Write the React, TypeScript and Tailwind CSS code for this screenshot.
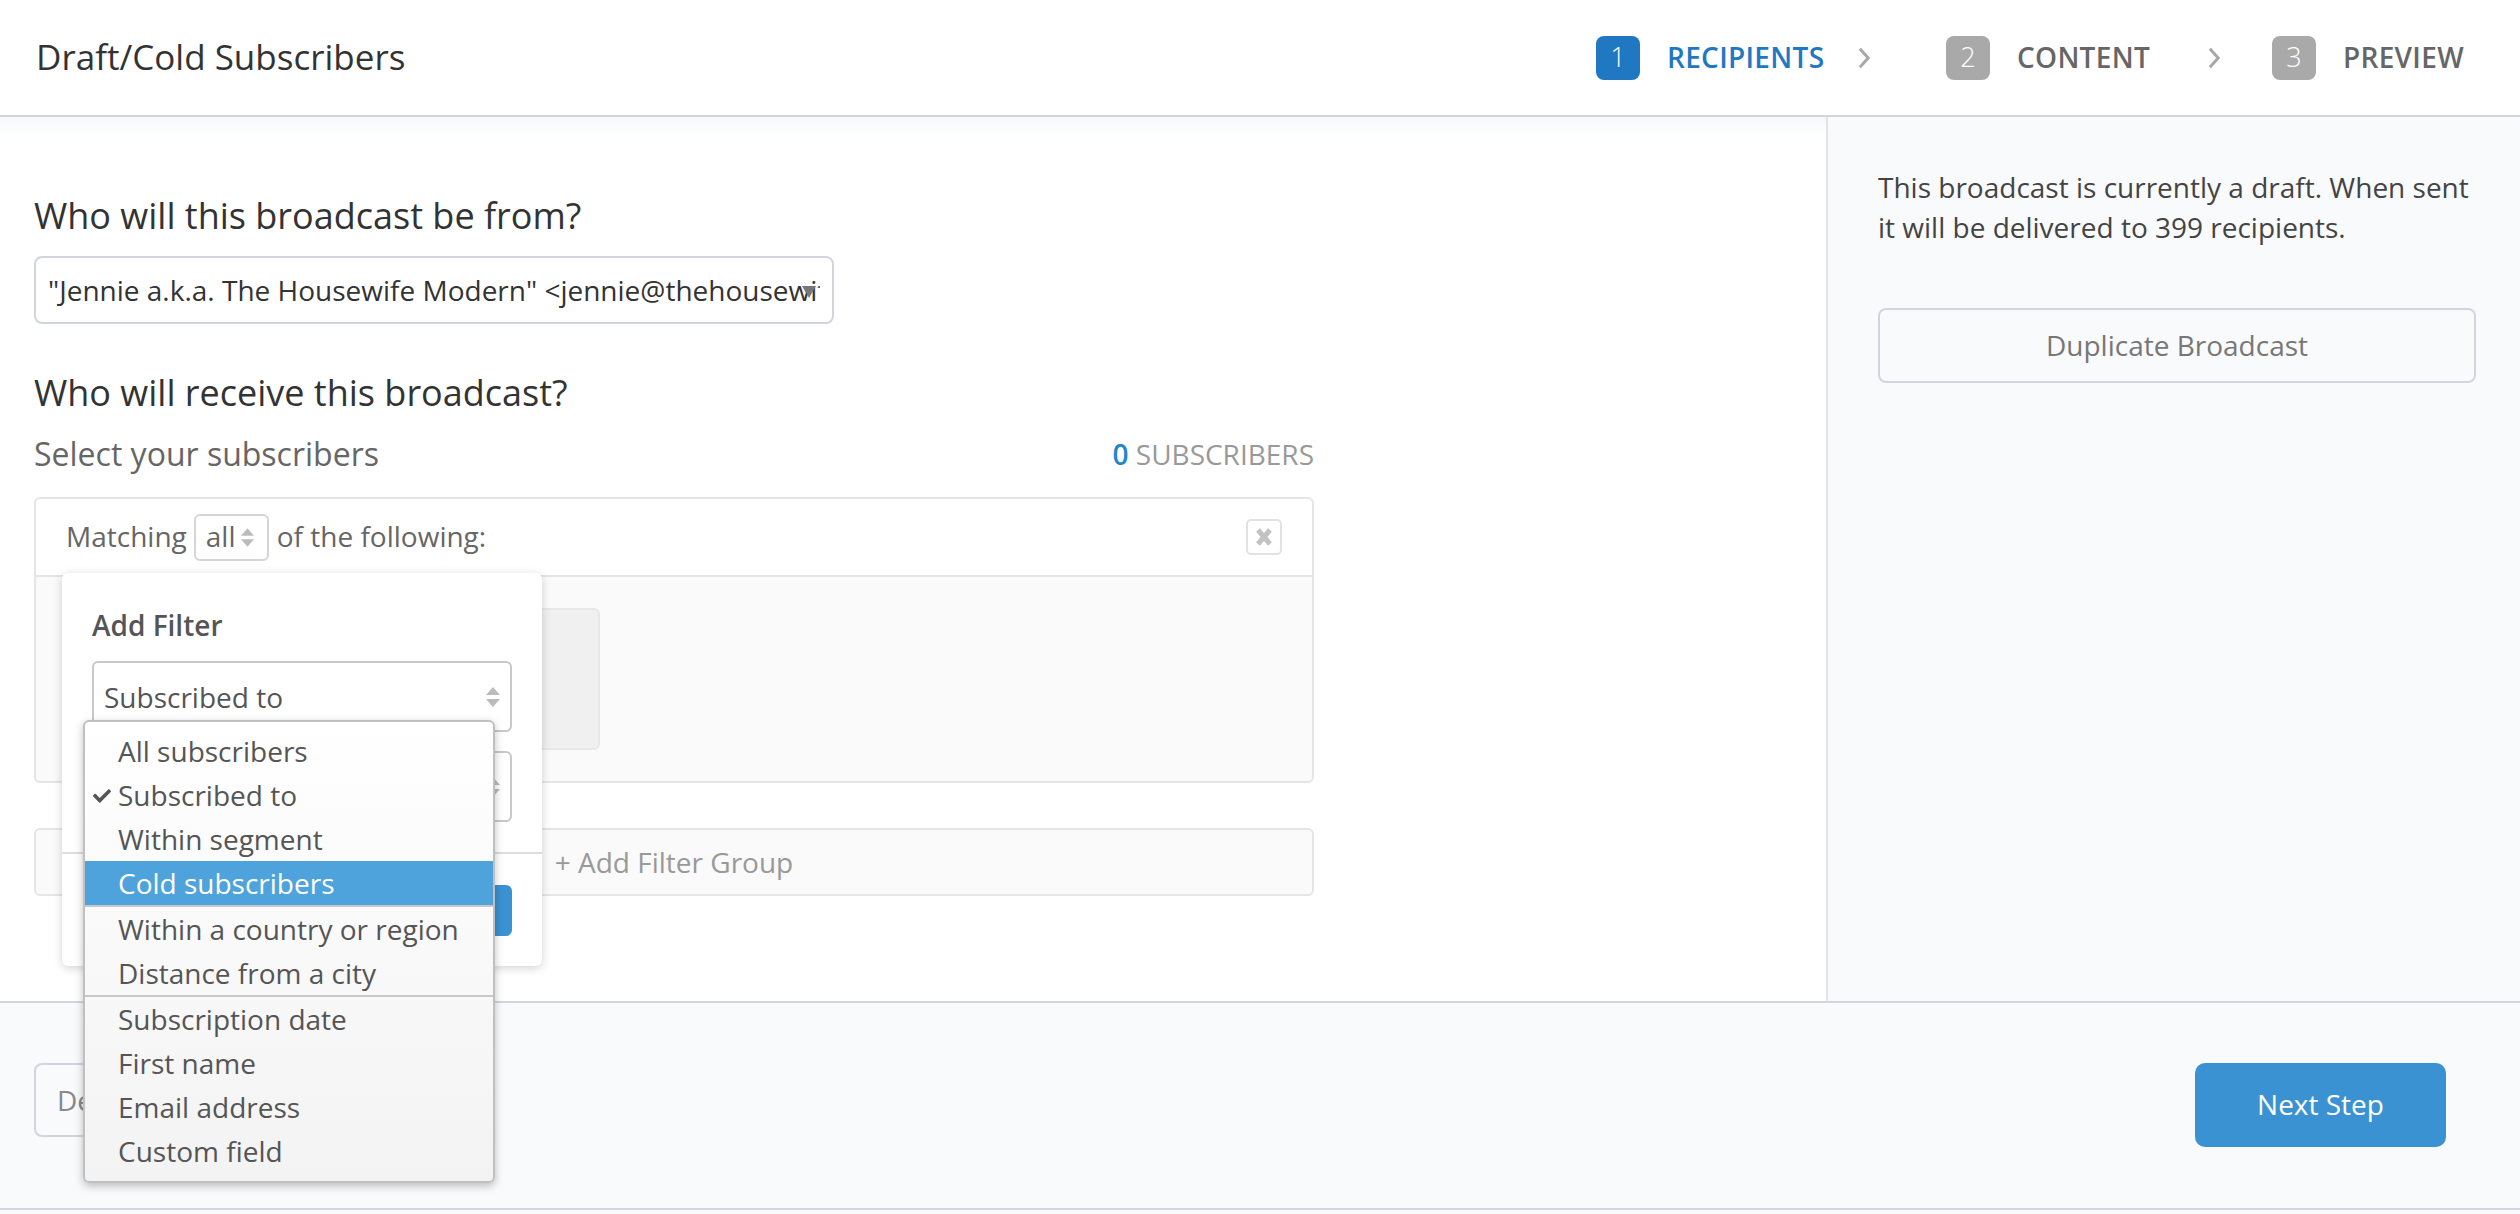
import React from 'react';
import { FaCheck } from 'react-icons/fa';

function Arrows({ className }: { className: string }) {
  return (
    <svg viewBox="0 0 14 20" className={className} fill="currentColor">
      <path d="M7 0 L14 8 H0 Z" />
      <path d="M7 20 L0 12 H14 Z" />
    </svg>
  );
}

function Chevron() {
  return (
    <svg viewBox="0 0 14 24" className="w-[13px] h-[24px] text-[#a8a8a8]" fill="none" stroke="currentColor" strokeWidth="3.2">
      <path d="M2 2 L11 12 L2 22" />
    </svg>
  );
}

function Step({ n, label, active, labelW }: { n: string; label: string; active?: boolean; labelW: string }) {
  return (
    <div className="flex items-center">
      <div className={`w-[44px] h-[44px] rounded-[8px] flex items-center justify-center text-white text-[27px] font-light ${active ? 'bg-[#1f78c1]' : 'bg-[#a9a9a9]'}`}>{n}</div>
      <div className={`ml-[27px] mb-[2px] text-[28px] font-semibold tracking-[0.3px] whitespace-nowrap ${labelW} ${active ? 'text-[#1f78c1]' : 'text-[#666666]'}`}>{label}</div>
    </div>
  );
}

const menuA = ['All subscribers', 'Subscribed to', 'Within segment'];
const menuB = ['Within a country or region', 'Distance from a city'];
const menuC = ['Subscription date', 'First name', 'Email address', 'Custom field'];

function Item({ label, checked, active }: { label: string; checked?: boolean; active?: boolean }) {
  return (
    <div className={`relative h-[44px] pl-[33px] flex items-center text-[28px] ${active ? 'bg-[#4fa3dc] text-white' : 'text-[#555555]'}`}>
      {checked && <FaCheck className="absolute left-[8px] top-[14px] w-[18px] h-[18px] text-[#555555]" />}
      {label}
    </div>
  );
}

export default function App() {
  return (
    <div className="h-[1214px] w-[2520px] flex flex-col bg-[#f9fafc] overflow-hidden font-['Open_Sans',sans-serif]">
      <header className="h-[117px] shrink-0 bg-white border-b-2 border-[#d2d5dd] flex items-center justify-between pl-[36px] pr-[56px]">
        <h1 className="text-[35px] font-medium text-[#333333]">Draft/Cold Subscribers</h1>
        <div className="flex items-center">
          <Step n="1" label="RECIPIENTS" active labelW="w-[158px]" />
          <div className="ml-[33px] mr-[75px]"><Chevron /></div>
          <Step n="2" label="CONTENT" labelW="w-[134px]" />
          <div className="ml-[57px] mr-[51px]"><Chevron /></div>
          <Step n="3" label="PREVIEW" labelW="w-[121px]" />
        </div>
      </header>

      <div className="h-[884px] shrink-0 flex">
        <main className="w-[1826px] shrink-0 bg-white pl-[34px] pt-[77px] bg-gradient-to-b from-[#f6f7f9] from-0% to-white to-[2%]">
          <h2 className="text-[36px] leading-[44px] text-[#333333]">Who will this broadcast be from?</h2>
          <div className="relative mt-[18px] w-[800px] h-[68px] border-2 border-[#d2d5dd] rounded-[8px] bg-white pl-[12px] pr-[12px] flex items-center">
            <span className="block overflow-hidden whitespace-nowrap text-[28px] text-[#333333]">"Jennie a.k.a. The Housewife Modern" &lt;jennie@thehousewifemodern.com&gt;</span>
            <svg viewBox="0 0 14 12" className="absolute right-[16px] top-[28px] w-[14px] h-[12px] text-[#777777]" fill="currentColor"><path d="M0 0 H14 L7 12 Z" /></svg>
          </div>
          <h2 className="mt-[47px] text-[36px] leading-[44px] text-[#333333]">Who will receive this broadcast?</h2>

          <div className="w-[1280px]">
            <div className="mt-[21px] h-[36px] flex items-center justify-between">
              <span className="text-[32px] text-[#666666]">Select your subscribers</span>
              <span className="text-[28px] text-[#999999]"><b className="font-semibold text-[#1f86d0]">0</b> SUBSCRIBERS</span>
            </div>

            <div className="relative mt-[25px]">
              <div className="border-2 border-[#e5e5e5] rounded-[6px] bg-[#fafafa]">
                <div className="h-[78px] bg-white rounded-t-[6px] border-b-2 border-[#e5e5e5] flex items-center pl-[30px] pr-[30px] text-[28px] text-[#666666]">
                  <span className="mb-[3px]">Matching</span>
                  <span className="ml-[7px] mr-[8px] w-[75px] h-[47px] border-2 border-[#d5d5d5] rounded-[6px] flex items-center pl-[10px] gap-[6px]">
                    <span className="mb-[3px]">all</span> <Arrows className="w-[13px] h-[19px] text-[#bbbbbb]" />
                  </span>
                  <span className="mb-[3px]">of the following:</span>
                  <span className="ml-auto w-[36px] h-[36px] border-2 border-[#e2e2e2] rounded-[5px] flex items-center justify-center">
                    <svg viewBox="0 0 16 20" className="w-[16px] h-[20px] text-[#c2c2c2]" fill="none" stroke="currentColor" strokeWidth="5">
                      <path d="M2 3 L14 17 M14 3 L2 17" />
                    </svg>
                  </span>
                </div>
                <div className="h-[204px] pt-[31px] pl-[30px]">
                  <div className="w-[534px] h-[142px] bg-[#f0f0f0] border-2 border-[#e8e8e8] rounded-[6px]" />
                </div>
              </div>

              <div className="mt-[45px] h-[68px] border-2 border-[#e5e5e5] rounded-[6px] bg-[#fafafa] flex items-center justify-center text-[28px] text-[#999999]">+ Add Filter Group</div>

              <div className="absolute left-[28px] top-[76px] w-[480px] h-[393px] bg-white rounded-[6px] shadow-[0_2px_10px_rgba(0,0,0,0.18)] pt-[34px]">
                <div className="pl-[30px] h-[36px] flex items-center text-[28px] font-semibold text-[#555555]">Add Filter</div>
                <div className="ml-[30px] mt-[18px] w-[420px] h-[71px] border-2 border-[#c8c8c8] rounded-[6px] pl-[10px] pr-[10px] flex items-center justify-between text-[28px] text-[#555555]">
                  Subscribed to <Arrows className="w-[14px] h-[20px] text-[#bbbbbb]" />
                </div>
                <div className="ml-[30px] mt-[19px] w-[420px] h-[71px] border-2 border-[#c8c8c8] rounded-[6px] pr-[10px] flex items-center justify-end">
                  <Arrows className="w-[14px] h-[20px] text-[#bbbbbb]" />
                </div>
                <div className="mt-[30px] border-t-2 border-[#dddddd] pt-[31px] pr-[30px] flex justify-end">
                  <div className="w-[200px] h-[51px] rounded-[6px] bg-[#3b92d2]" />
                </div>

                <div className="absolute left-[21px] top-[147px] w-[412px] h-[463px] border-2 border-[#c0c0c0] rounded-[6px] bg-gradient-to-b from-white to-[#f3f3f3] shadow-[0_3px_8px_rgba(0,0,0,0.25)] overflow-hidden pt-[7px]">
                  {menuA.map((m) => <Item key={m} label={m} checked={m === 'Subscribed to'} />)}
                  <Item label="Cold subscribers" active />
                  <div className="border-t-2 border-[#c8c8c8]">
                    {menuB.map((m) => <Item key={m} label={m} />)}
                  </div>
                  <div className="border-t-2 border-[#c8c8c8]">
                    {menuC.map((m) => <Item key={m} label={m} />)}
                  </div>
                </div>
              </div>
            </div>
          </div>
        </main>

        <aside className="flex-1 border-l-2 border-[#e3e4e8] pl-[50px] pr-[44px] pt-[50px]">
          <p className="text-[28px] leading-[40px] text-[#444444]">This broadcast is currently a draft. When sent it will be delivered to 399 recipients.</p>
          <div className="mt-[61px] h-[75px] border-2 border-[#d2d5dd] rounded-[8px] flex items-center justify-center text-[28px] text-[#777777] pb-[2px]">Duplicate Broadcast</div>
        </aside>
      </div>

      <footer className="h-[209px] shrink-0 border-y-2 border-[#d2d5dd] flex items-start justify-between pl-[34px] pr-[74px] pt-[60px]">
        <div className="h-[74px] w-[300px] border-2 border-[#d2d5dd] rounded-[8px] flex items-center pl-[21px] text-[28px] text-[#888888]">Delete Draft</div>
        <div className="w-[251px] h-[84px] rounded-[10px] bg-[#3b92d2] flex items-center justify-center text-[28px] text-white pb-[2px]">Next Step</div>
      </footer>
    </div>
  );
}
